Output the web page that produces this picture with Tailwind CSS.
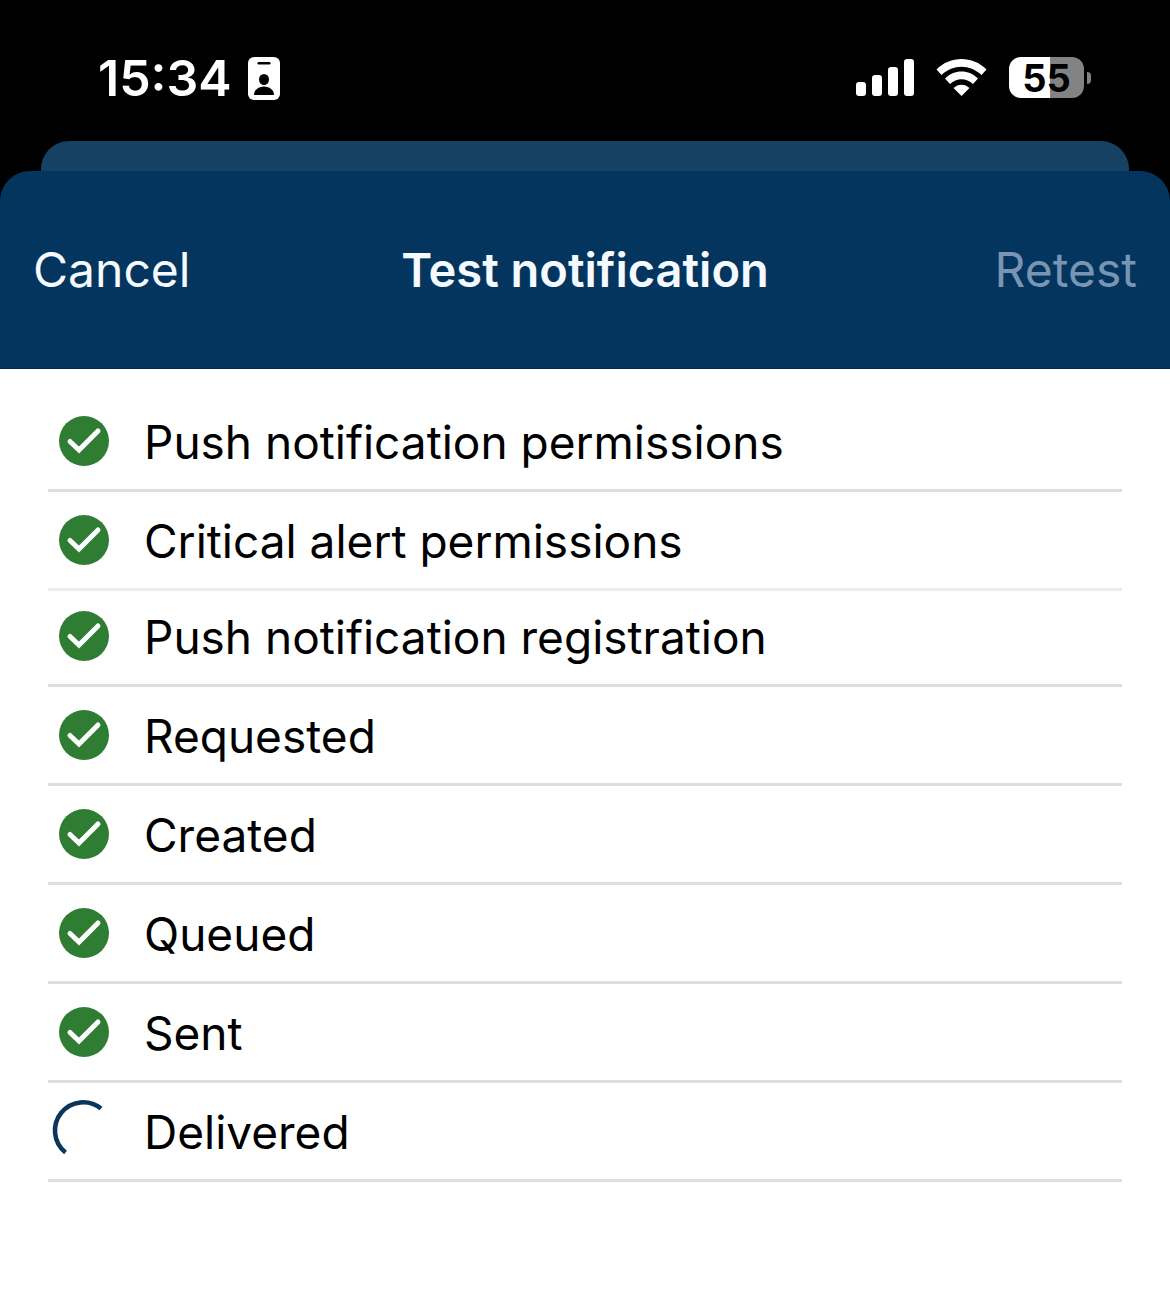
<!DOCTYPE html>
<html lang="en">
<head>
<meta charset="utf-8">
<meta name="viewport" content="width=device-width, initial-scale=1">
<title>Test notification</title>
<script src="https://cdn.jsdelivr.net/npm/@tailwindcss/browser@4"></script>
</head>
<body class="min-h-screen bg-white text-black font-['Inter',sans-serif]">
<svg class="hidden" aria-hidden="true">
  <symbol id="check" viewBox="0 0 50 50">
    <circle cx="25" cy="25" r="25" fill="#2e7d32"/>
    <path d="M11 25.500 L20 34 L39 15" fill="none" stroke="#fff" stroke-width="5" stroke-linecap="round"/>
  </symbol>
</svg>
<div class="bg-black">
  <div class="flex h-[141px] items-center justify-between pt-3.5 pr-[79px] pl-[98px] text-white">
    <div class="flex items-center gap-4">
      <time class="text-[50px] leading-none font-semibold">15:34</time>
      <svg class="h-11 w-8" viewBox="0 0 32 44" aria-label="Focus">
        <rect y="1" width="32" height="43" rx="6" fill="#fff"/>
        <rect x="9.500" y="6" width="13" height="2.500" rx="1.200"/>
        <ellipse cx="16" cy="23.500" rx="5" ry="5.500"/>
        <path d="M6 39c0-5 4.500-8.500 10-8.500S26 34 26 39z"/>
      </svg>
    </div>
    <div class="flex items-center gap-[22px]">
      <svg class="h-10 w-[58px]" viewBox="0 0 58 40" fill="#fff" aria-label="Signal">
        <rect y="24" width="10" height="14" rx="3"/><rect x="16" y="17" width="10" height="21" rx="3"/><rect x="32" y="9" width="10" height="29" rx="3"/><rect x="48" y="1" width="10" height="37" rx="3"/>
      </svg>
      <svg class="h-10 w-[51px]" viewBox="0 0 51 40" fill="#fff" aria-label="Wi-Fi">
        <path d="M0.500 11.500C14 -2.500 37 -2.500 50.500 11.500L45.500 17C34 6 17 6 5.500 17Z"/>
        <path d="M9 20.500C18 11 33 11 42 20.500L37 26C30.500 19.500 20.500 19.500 14 26Z"/>
        <path d="M17.500 30C22 25.500 29 25.500 33.500 30L25.500 38Z"/>
      </svg>
      <div class="flex items-center gap-[3px]">
        <div class="flex h-[41px] w-[75px] items-center justify-center rounded-xl bg-linear-to-r from-white from-55% to-[#838383] to-55% text-[38px] leading-none font-bold text-black">55</div>
        <div class="h-3 w-1 rounded-r-full bg-[#838383]"></div>
      </div>
    </div>
  </div>
  <div class="mx-[41px] h-[30px] rounded-t-[28px] bg-[#174163]"></div>
  <header class="grid h-[198px] grid-cols-[1fr_auto_1fr] items-center rounded-t-[30px] border-b border-[#052846] bg-[#04355f] px-[33px] text-[48px] leading-none text-[#f4faff]">
    <button type="button" class="justify-self-start">Cancel</button>
    <h1 class="text-[47px] font-semibold">Test notification</h1>
    <button type="button" disabled class="justify-self-end text-[#7896b4]">Retest</button>
  </header>
</div>
<main class="mx-12 pt-6 text-[46px] leading-none">
  <ul>
    <li class="flex h-[99px] items-center gap-[35px] border-b-3 border-[#dedede] pl-[11px]"><svg class="size-[50px]"><use href="#check"/></svg><span class="pt-0.5">Push notification permissions</span></li>
    <li class="flex h-[99px] items-center gap-[35px] border-b-3 border-[#ebebeb] pl-[11px]"><svg class="size-[50px]"><use href="#check"/></svg><span class="pt-0.5">Critical alert permissions</span></li>
  </ul>
  <ul class="-mt-[3px]">
    <li class="flex h-[99px] items-center gap-[35px] border-b-3 border-[#dedede] pl-[11px]"><svg class="size-[50px]"><use href="#check"/></svg><span class="pt-0.5">Push notification registration</span></li>
    <li class="flex h-[99px] items-center gap-[35px] border-b-3 border-[#dedede] pl-[11px]"><svg class="size-[50px]"><use href="#check"/></svg><span class="pt-0.5">Requested</span></li>
    <li class="flex h-[99px] items-center gap-[35px] border-b-3 border-[#dedede] pl-[11px]"><svg class="size-[50px]"><use href="#check"/></svg><span class="pt-0.5">Created</span></li>
    <li class="flex h-[99px] items-center gap-[35px] border-b-3 border-[#dedede] pl-[11px]"><svg class="size-[50px]"><use href="#check"/></svg><span class="pt-0.5">Queued</span></li>
    <li class="flex h-[99px] items-center gap-[35px] border-b-3 border-[#dedede] pl-[11px]"><svg class="size-[50px]"><use href="#check"/></svg><span class="pt-0.5">Sent</span></li>
    <li class="flex h-[99px] items-center gap-[35px] border-b-3 border-[#dedede] pl-[11px]"><svg class="size-[50px] overflow-visible" viewBox="0 0 50 50" role="status" aria-label="In progress"><path d="M42 2.500A28 28 0 0 0 6.500 46.500" fill="none" stroke="#0b365c" stroke-width="4.500"/></svg><span class="pt-0.5">Delivered</span></li>
  </ul>
</main>
</body>
</html>
